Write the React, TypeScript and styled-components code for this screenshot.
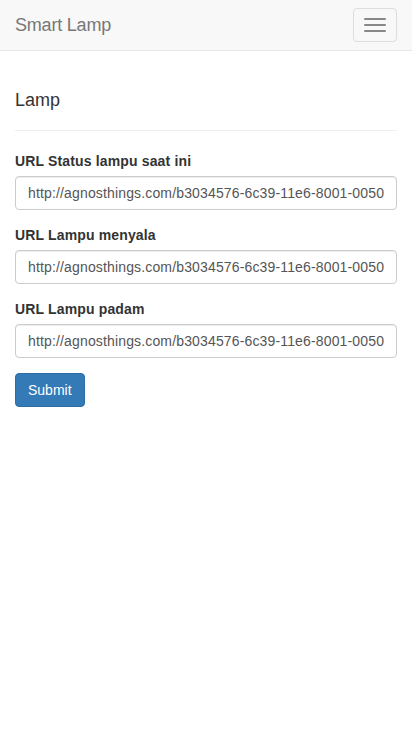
import React from 'react';
import styled, { createGlobalStyle } from 'styled-components';

const GlobalStyle = createGlobalStyle`
  html, body {
    margin: 0;
    padding: 0;
    background: #fff;
  }
  body {
    font-family: "Liberation Sans", Arial, Helvetica, sans-serif;
    font-size: 14px;
    line-height: 1.42857143;
    color: #333;
  }
  * {
    box-sizing: border-box;
  }
`;

const Navbar = styled.nav`
  height: 51px;
  background: #f8f8f8;
  border-bottom: 1px solid #e7e7e7;
  display: flex;
  align-items: flex-start;
  justify-content: space-between;
  padding: 0 15px;
`;

const Brand = styled.a`
  font-size: 18px;
  line-height: 20px;
  height: 50px;
  padding: 15px 0;
  color: #777;
  text-decoration: none;
  letter-spacing: -0.2px;
`;

const Toggle = styled.button`
  width: 44px;
  height: 34px;
  margin-top: 8px;
  padding: 9px 10px;
  background: transparent;
  border: 1px solid #ddd;
  border-radius: 4px;
  display: flex;
  flex-direction: column;
  gap: 4px;
`;

const IconBar = styled.span`
  display: block;
  width: 22px;
  height: 2px;
  border-radius: 1px;
  background: #888;
`;

const Container = styled.div`
  padding: 40px 15px 0;
`;

const Title = styled.h4`
  margin: 0;
  font-size: 18px;
  font-weight: 500;
  line-height: 1.1;
  color: #333;
`;

const Divider = styled.hr`
  margin: 19px 0 20px;
  border: 0;
  border-top: 1px solid #eee;
`;

const FormGroup = styled.div`
  margin-bottom: 15px;
`;

const Label = styled.label`
  display: block;
  margin-bottom: 5px;
  font-weight: bold;
  color: #333;
  letter-spacing: 0.15px;
`;

const Input = styled.input`
  display: block;
  width: 100%;
  height: 34px;
  padding: 6px 12px;
  font-family: inherit;
  font-size: 14px;
  line-height: 1.42857143;
  letter-spacing: 0.15px;
  color: #555;
  background: #fff;
  border: 1px solid #ccc;
  border-radius: 4px;
  box-shadow: inset 0 1px 1px rgba(0, 0, 0, 0.075);
  outline: none;
`;

const SubmitButton = styled.button`
  display: inline-block;
  padding: 6px 12px;
  height: 34px;
  font-family: inherit;
  font-size: 14px;
  line-height: 1.42857143;
  color: #fff;
  background: #337ab7;
  border: 1px solid #2e6da4;
  border-radius: 4px;
`;

const url = 'http://agnosthings.com/b3034576-6c39-11e6-8001-005056805279';

const fields = [
  { id: 'status', label: 'URL Status lampu saat ini' },
  { id: 'on', label: 'URL Lampu menyala' },
  { id: 'off', label: 'URL Lampu padam' },
];

export default function App() {
  return (
    <>
      <GlobalStyle />
      <Navbar>
        <Brand href="#">Smart Lamp</Brand>
        <Toggle type="button" aria-label="Toggle navigation">
          <IconBar />
          <IconBar />
          <IconBar />
        </Toggle>
      </Navbar>
      <Container>
        <Title>Lamp</Title>
        <Divider />
        <form onSubmit={(e) => e.preventDefault()}>
          {fields.map((f) => (
            <FormGroup key={f.id}>
              <Label htmlFor={f.id}>{f.label}</Label>
              <Input id={f.id} type="text" defaultValue={url} />
            </FormGroup>
          ))}
          <SubmitButton type="submit">Submit</SubmitButton>
        </form>
      </Container>
    </>
  );
}
